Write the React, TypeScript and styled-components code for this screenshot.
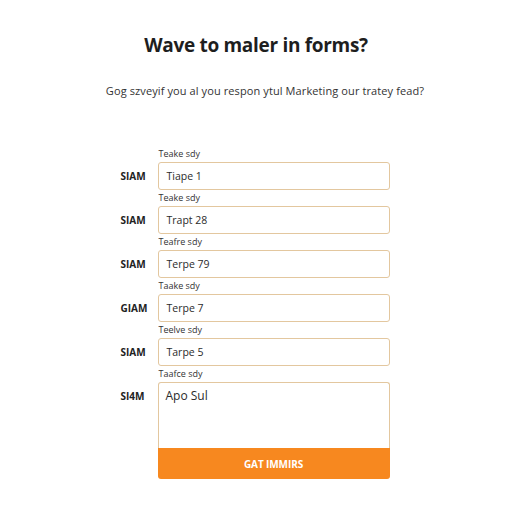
import React from "react";
import styled, { createGlobalStyle } from "styled-components";

const Global = createGlobalStyle`
  html, body { margin: 0; padding: 0; background: #ffffff; }
  body { font-family: "Open Sans", "Liberation Sans", sans-serif; color: #222; }
`;

const Page = styled.div`
  width: 512px;
  height: 512px;
  display: flex;
  flex-direction: column;
  align-items: center;
  box-sizing: border-box;
  padding-top: 30px;
`;

const Title = styled.h1`
  margin: 0;
  font-size: 19px;
  line-height: 30px;
  font-weight: 700;
  color: #1e1e1e;
  letter-spacing: -0.3px;
`;

const Subtitle = styled.p`
  margin: 23px 0 0 18px;
  font-size: 11px;
  line-height: 16px;
  color: #333;
  letter-spacing: 0.1px;
`;

const Form = styled.form`
  margin-top: 48px;
  width: 270px;
  margin-left: -1px;
  display: flex;
  flex-direction: column;
  gap: 1px;
`;

const Group = styled.div`
  display: grid;
  grid-template-columns: 37px 232px;
  grid-template-rows: 14px auto;
  row-gap: 1px;
`;

const FieldLabel = styled.label`
  grid-column: 2;
  grid-row: 1;
  font-size: 9px;
  line-height: 14px;
  color: #333;
  padding-left: 1px;
`;

const SideLabel = styled.span`
  grid-column: 1;
  grid-row: 2;
  font-size: 10px;
  font-weight: 700;
  line-height: 12px;
  color: #222;
  padding-top: 8px;
`;

const Input = styled.div`
  grid-column: 2;
  grid-row: 2;
  box-sizing: border-box;
  height: 28px;
  border: 1px solid #e3c79f;
  border-radius: 3px;
  padding: 0 8px;
  display: flex;
  align-items: center;
  font-size: 10.5px;
  color: #2b2b2b;
  background: #fff;
`;

const AreaWrap = styled.div`
  grid-column: 2;
  grid-row: 2;
  display: flex;
  flex-direction: column;
`;

const TextArea = styled.div`
  box-sizing: border-box;
  height: 66px;
  border: 1px solid #e3c79f;
  border-bottom: none;
  border-radius: 3px 3px 0 0;
  padding: 5px 7px;
  font-size: 12px;
  line-height: 16px;
  color: #2b2b2b;
`;

const Button = styled.button`
  height: 31px;
  border: none;
  border-radius: 0 0 3px 3px;
  background: #f7881f;
  color: #fff;
  font-family: "Open Sans", "Liberation Sans", sans-serif;
  font-weight: 700;
  font-size: 10px;
  letter-spacing: -0.1px;
  cursor: pointer;
`;

const fields = [
  { label: "Teake sdy", side: "SIAM", value: "Tiape 1" },
  { label: "Teake sdy", side: "SIAM", value: "Trapt 28" },
  { label: "Teafre sdy", side: "SIAM", value: "Terpe 79" },
  { label: "Taake sdy", side: "GIAM", value: "Terpe 7" },
  { label: "Teelve sdy", side: "SIAM", value: "Tarpe 5" },
];

export default function App() {
  return (
    <>
      <Global />
      <Page>
        <Title>Wave to maler in forms?</Title>
        <Subtitle>Gog szveyif you al you respon ytul Marketing our tratey fead?</Subtitle>
        <Form onSubmit={(e) => e.preventDefault()}>
          {fields.map((f, i) => (
            <Group key={i}>
              <FieldLabel>{f.label}</FieldLabel>
              <SideLabel>{f.side}</SideLabel>
              <Input>{f.value}</Input>
            </Group>
          ))}
          <Group>
            <FieldLabel>Taafce sdy</FieldLabel>
            <SideLabel>SI4M</SideLabel>
            <AreaWrap>
              <TextArea>Apo Sul</TextArea>
              <Button type="submit">GAT IMMIRS</Button>
            </AreaWrap>
          </Group>
        </Form>
      </Page>
    </>
  );
}
